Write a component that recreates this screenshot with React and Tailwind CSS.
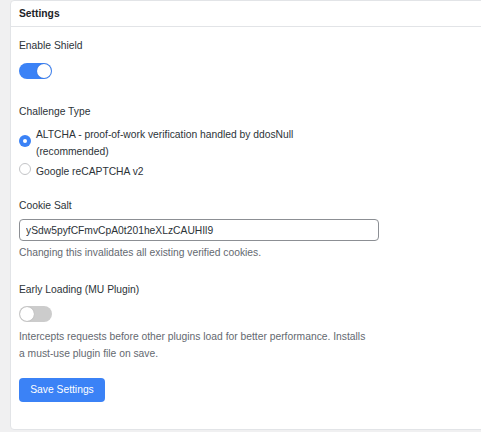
import React, { useState } from 'react';

const FONT = { fontFamily: '"Liberation Sans", Arial, sans-serif' };

function Toggle({ on, onChange }) {
  return (
    <button
      type="button"
      onClick={() => onChange(!on)}
      className={`relative block w-[33px] h-[16px] rounded-full ${on ? 'bg-[#3b82f6]' : 'bg-[#cccccc]'}`}
    >
      <span
        className={`absolute top-[1px] w-[14px] h-[14px] rounded-full bg-white shadow-[0_0_1px_rgba(0,0,0,0.3)] ${on ? 'left-[18px]' : 'left-[1px]'}`}
      />
    </button>
  );
}

function Radio({ checked, onClick, children }) {
  return (
    <label onClick={onClick} className="flex items-center gap-[5px] cursor-pointer">
      {checked ? (
        <span className="shrink-0 mb-[4px] w-[12px] h-[12px] rounded-full bg-[#3b82f6] flex items-center justify-center">
          <span className="w-[4px] h-[4px] rounded-full bg-white" />
        </span>
      ) : (
        <span className="shrink-0 mb-[4px] w-[12px] h-[12px] rounded-full border border-[#c3c4c7] bg-white" />
      )}
      <span className="leading-[17px] max-w-[270px]">{children}</span>
    </label>
  );
}

export default function App() {
  const [shield, setShield] = useState(true);
  const [early, setEarly] = useState(false);
  const [challenge, setChallenge] = useState('altcha');
  const [salt, setSalt] = useState('ySdw5pyfCFmvCpA0t201heXLzCAUHIl9');

  return (
    <div className="w-[481px] h-[432px] overflow-hidden bg-[#f0f0f1] pl-[10px] text-[10.3px] text-[#2c3338]" style={FONT}>
      <div className="w-[480px] bg-white border border-[#e2e4e7] rounded-[4px]">
        {/* Header */}
        <div className="h-[26px] flex items-center px-[8px] border-b border-[#e2e4e7]">
          <h2 className="text-[10.3px] font-bold text-[#1d2327]">Settings</h2>
        </div>

        {/* Body */}
        <div className="pl-[8px] pt-[8px] pb-[27px] w-[368px]">
          <p className="pt-[3px] leading-[15px]">Enable Shield</p>
          <div className="mt-[10px]">
            <Toggle on={shield} onChange={setShield} />
          </div>

          <p className="mt-[22px] pt-[3px] leading-[15px]">Challenge Type</p>
          <div className="mt-[6.5px] flex flex-col gap-[3px]">
            <Radio checked={challenge === 'altcha'} onClick={() => setChallenge('altcha')}>
              ALTCHA - proof-of-work verification handled by ddosNull (recommended)
            </Radio>
            <Radio checked={challenge === 'recaptcha'} onClick={() => setChallenge('recaptcha')}>
              Google reCAPTCHA v2
            </Radio>
          </div>

          <p className="mt-[15.5px] pt-[3px] leading-[15px]">Cookie Salt</p>
          <input
            value={salt}
            onChange={(e) => setSalt(e.target.value)}
            className="mt-[6px] block w-[360px] h-[22px] px-[6px] border border-[#8c8f94] rounded-[4px] text-[10.3px] text-[#2c3338] outline-none"
            style={FONT}
          />
          <p className="mt-[4px] leading-[16px] text-[#646970]">Changing this invalidates all existing verified cookies.</p>

          <p className="mt-[18px] pt-[3px] leading-[15px]">Early Loading (MU Plugin)</p>
          <div className="mt-[9px]">
            <Toggle on={early} onChange={setEarly} />
          </div>
          <p className="mt-[5.5px] leading-[17px] text-[#646970] w-[352px]">
            Intercepts requests before other plugins load for better performance. Installs a must-use plugin file on save.
          </p>

          <button
            type="button"
            className="mt-[16px] w-[86px] h-[24px] rounded-[4px] bg-[#3b82f6] text-white text-[10.3px]"
            style={FONT}
          >
            Save Settings
          </button>
        </div>
      </div>
    </div>
  );
}
